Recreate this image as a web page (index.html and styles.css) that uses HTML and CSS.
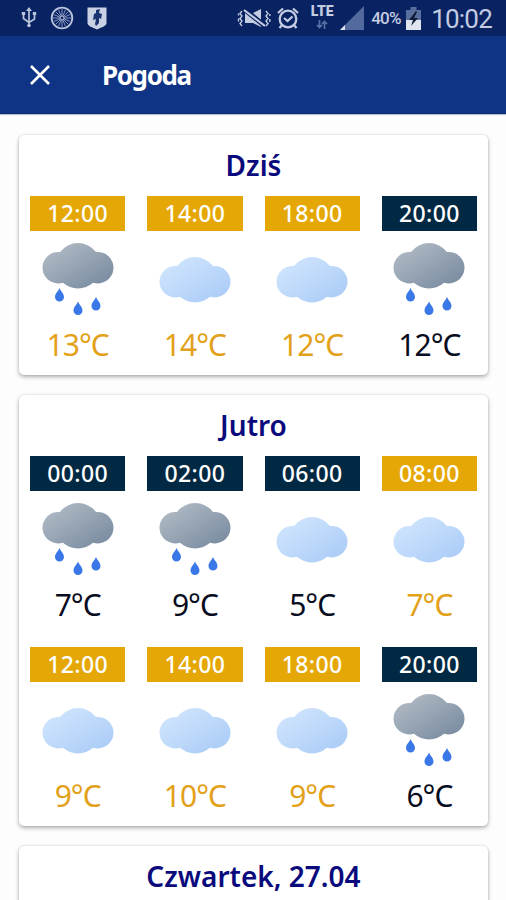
FILE: index.html
```html
<!DOCTYPE html>
<html lang="pl">
<head>
    <meta charset="UTF-8">
    <meta name="viewport" content="width=device-width, initial-scale=1.0">
    <title>Pogoda</title>
    <link rel="stylesheet" href="styles.css">
</head>
<body>
    <svg class="defs" width="0" height="0">
        <defs>
            <linearGradient id="greyFill" x1="0" y1="0" x2="1" y2="1">
                <stop offset="0.1" stop-color="#b0bac4"/>
                <stop offset="0.95" stop-color="#77899f"/>
            </linearGradient>
            <linearGradient id="blueFill" x1="0" y1="0" x2="1" y2="1">
                <stop offset="0.1" stop-color="#d0e5fd"/>
                <stop offset="0.95" stop-color="#a9cbf7"/>
            </linearGradient>
            <path id="cloudShape" d="M19 10A22.600 22.600 0 0 1 55 10A15.800 15.800 0 1 1 52 40.800A22.600 22.600 0 0 1 22 40.800A15.800 15.800 0 1 1 19 10z"/>
            <path id="drop" d="M0 0c1 3 4.500 5.300 4.500 9a4.500 4.500 0 0 1-9 0C-4.500 5.300-1 3 0 0z"/>
            <symbol id="cloud" viewBox="0 0 74 76">
                <use href="#cloudShape" y="14" fill="url(#blueFill)"/>
            </symbol>
            <symbol id="rain" viewBox="0 0 74 76">
                <use href="#cloudShape" fill="url(#greyFill)"/>
                <g fill="#3b78e7">
                    <use href="#drop" x="18.500" y="46"/>
                    <use href="#drop" x="37" y="59.500"/>
                    <use href="#drop" x="55" y="55"/>
                </g>
            </symbol>
        </defs>
    </svg>

    <div class="status-bar">
        <div class="status-left">
            <svg width="16" height="22" viewBox="0 0 16 22" fill="none" stroke="#b9c3dc" stroke-width="1.700">
                <path d="M8 3v16M2.500 7v4.500L8 15.500l5.500-3.500V7"/>
                <path d="M8 0l3 4H5zM.800 5h3.400v3H.800zM11.800 5h3.400v3h-3.400z" fill="#b9c3dc" stroke="none"/>
                <circle cx="8" cy="18.500" r="1.800" fill="#b9c3dc" stroke="none"/>
            </svg>
            <svg width="24" height="24" viewBox="0 0 24 24" fill="none" stroke="#b9c3dc">
                <circle cx="12" cy="12" r="10.300" stroke-width="1.800"/>
                <path d="M12 3v18M3 12h18M5.600 5.600l12.800 12.800M18.400 5.600L5.600 18.400M8.500 3.700l7 16.600M15.500 3.700l-7 16.600M3.700 8.500l16.600 7M3.700 15.500l16.600-7" stroke-width="1" stroke="#8797bf"/>
                <circle cx="12" cy="12" r="2" fill="#082262" stroke-width="1"/>
            </svg>
            <svg width="20" height="23" viewBox="0 0 20 23">
                <path d="M.500.500h19V16c0 3-5 4.500-9.500 6.500C5.500 20.500.500 19 .500 16z" fill="#c9d2e4"/>
                <path d="M9 3l4-1-1 4 3 1-1 5-2-1v5l-3 3-1-2 1-5-3 1 1-6 2-1z" fill="#18336f"/>
            </svg>
        </div>
        <div class="status-right">
            <svg class="mute" width="34" height="20" viewBox="0 0 34 20" fill="none" stroke="#c3cce1">
                <path d="M8 5h8l8-4v18l-8-4H8z" fill="#c3cce1" stroke="none"/>
                <path d="M7 1l21 17" stroke="#082262" stroke-width="5"/>
                <path d="M7 2l21 16" stroke-width="2.200"/>
                <path d="M5 3L3 5.500 5 8l-2 2.500L5 13l-2 2.500L5 18M1.500 5.500v2M1.500 10.500v3M29 3l2 2.500L29 8l2 2.500L29 13l2 2.500L29 18M32.800 6v2M32.800 11v3" stroke-width="1.400"/>
            </svg>
            <svg class="alarm" width="22" height="23" viewBox="0 0 22 23" fill="none" stroke="#c3cce1" stroke-width="2.300">
                <circle cx="11" cy="12" r="8.300"/>
                <path d="M1 6l5-4.500M21 6l-5-4.500M5 18l-2.500 3M17 18l2.500 3M7 11l3.500 3 5-4.500"/>
            </svg>
            <div class="network">
                <span>LTE</span>
                <svg width="12" height="9" viewBox="0 0 12 9" fill="none" stroke="#5b70a6" stroke-width="1.700">
                    <path d="M3.500 0v7M1 5l2.500 2.500L6 5M8.500 9V2M6 4l2.500-2.500L11 4"/>
                </svg>
            </div>
            <svg class="signal" width="24" height="24" viewBox="0 0 24 24">
                <path d="M0 24L24 0v24z" fill="#526a9e"/>
                <path d="M0 24l5-5v5z" fill="#dce2ef"/>
            </svg>
            <span class="percent">40%</span>
            <svg class="battery" width="15" height="23" viewBox="0 0 15 23">
                <path d="M4.500 0h6v3H15v10H0V3h4.500z" fill="#586f9e"/>
                <path d="M0 13h15v10H0z" fill="#dfe4ee"/>
                <path d="M10 4l-7 9h4l-2 6 7-8H8l3-6z" fill="#101b38"/>
            </svg>
            <span class="clock">10:02</span>
        </div>
    </div>

    <div class="toolbar">
        <svg class="close" width="20" height="20" viewBox="0 0 20 20" fill="none" stroke="#fff" stroke-width="2.600">
            <path d="M1 1l18 18M19 1L1 19"/>
        </svg>
        <h1>Pogoda</h1>
    </div>

    <div class="content">
        <div class="card">
            <h2>Dziś</h2>
            <div class="hours">
                <div class="hour day">
                    <div class="time">12:00</div>
                    <svg class="icon"><use href="#rain"/></svg>
                    <div class="temp">13°C</div>
                </div>
                <div class="hour day">
                    <div class="time">14:00</div>
                    <svg class="icon"><use href="#cloud"/></svg>
                    <div class="temp">14°C</div>
                </div>
                <div class="hour day">
                    <div class="time">18:00</div>
                    <svg class="icon"><use href="#cloud"/></svg>
                    <div class="temp">12°C</div>
                </div>
                <div class="hour night">
                    <div class="time">20:00</div>
                    <svg class="icon"><use href="#rain"/></svg>
                    <div class="temp">12°C</div>
                </div>
            </div>
        </div>

        <div class="card">
            <h2>Jutro</h2>
            <div class="hours">
                <div class="hour night">
                    <div class="time">00:00</div>
                    <svg class="icon"><use href="#rain"/></svg>
                    <div class="temp">7°C</div>
                </div>
                <div class="hour night">
                    <div class="time">02:00</div>
                    <svg class="icon"><use href="#rain"/></svg>
                    <div class="temp">9°C</div>
                </div>
                <div class="hour night">
                    <div class="time">06:00</div>
                    <svg class="icon"><use href="#cloud"/></svg>
                    <div class="temp">5°C</div>
                </div>
                <div class="hour day">
                    <div class="time">08:00</div>
                    <svg class="icon"><use href="#cloud"/></svg>
                    <div class="temp">7°C</div>
                </div>
                <div class="hour day">
                    <div class="time">12:00</div>
                    <svg class="icon"><use href="#cloud"/></svg>
                    <div class="temp">9°C</div>
                </div>
                <div class="hour day">
                    <div class="time">14:00</div>
                    <svg class="icon"><use href="#cloud"/></svg>
                    <div class="temp">10°C</div>
                </div>
                <div class="hour day">
                    <div class="time">18:00</div>
                    <svg class="icon"><use href="#cloud"/></svg>
                    <div class="temp">9°C</div>
                </div>
                <div class="hour night">
                    <div class="time">20:00</div>
                    <svg class="icon"><use href="#rain"/></svg>
                    <div class="temp">6°C</div>
                </div>
            </div>
        </div>

        <div class="card">
            <h2>Czwartek, 27.04</h2>
        </div>
    </div>
</body>
</html>
```
FILE: styles.css
```css
* {
    box-sizing: border-box;
}
body {
    margin: 0;
    height: 900px;
    overflow: hidden;
    display: flex;
    flex-direction: column;
    background-color: #fdfdfd;
    font-family: "Noto Sans", sans-serif;
}
.defs {
    display: block;
    height: 0;
    flex: none;
}
svg {
    display: block;
    flex: none;
}
.status-bar {
    display: flex;
    justify-content: space-between;
    flex: none;
    height: 36px;
    padding: 0 14px 0 21px;
    background-color: #082262;
    color: #c3cce1;
    font-family: Roboto, sans-serif;
}
.status-left {
    display: flex;
    align-items: center;
    gap: 13px;
}
.status-right {
    display: flex;
    align-items: center;
}
.alarm {
    margin-left: 6px;
}
.network {
    display: flex;
    flex-direction: column;
    align-items: center;
    width: 24px;
    margin-left: 11px;
    margin-top: -4px;
    font-size: 14px;
    font-weight: 900;
    line-height: 15px;
}
.network svg {
    margin-top: 1px;
}
.signal {
    margin-left: 6px;
}
.percent {
    margin-left: 7px;
    width: 32px;
    font-size: 17px;
    font-weight: 500;
    letter-spacing: -0.8px;
    white-space: nowrap;
}
.battery {
    margin-left: 3px;
}
.clock {
    margin-left: 10px;
    padding-top: 2px;
    font-size: 26px;
    letter-spacing: -0.8px;
}
.toolbar {
    display: flex;
    align-items: center;
    flex: none;
    height: 78px;
    padding-left: 30px;
    background-color: #0f3485;
    border-bottom: 1px solid #0a2a70;
    box-shadow: 0 1px 1px #bbc3d6;
}
.toolbar h1 {
    margin: 0 0 0 52px;
    color: #fff;
    font-size: 26px;
    font-weight: 700;
    letter-spacing: -1.4px;
}
.content {
    display: flex;
    flex-direction: column;
    flex: 1;
    min-height: 0;
    overflow: hidden;
    gap: 20px;
    padding: 21px 18px 0 19px;
}
.card {
    flex: none;
    background-color: #fff;
    border-radius: 5px;
    box-shadow: 0 2px 4px rgba(0, 0, 0, 0.3), 0 0 2px rgba(0, 0, 0, 0.15);
}
.card h2 {
    margin: 0;
    padding-top: 10px;
    height: 61px;
    color: #0a0a7c;
    font-size: 28px;
    font-weight: 600;
    line-height: 40px;
    text-align: center;
}
.hours {
    display: grid;
    grid-template-columns: repeat(4, 1fr);
    row-gap: 12px;
}
.hour {
    display: flex;
    flex-direction: column;
    align-items: center;
    height: 179px;
    padding: 0 11px;
}
.time {
    width: 100%;
    height: 35px;
    color: #fff;
    font-size: 23px;
    font-weight: 500;
    line-height: 35px;
    letter-spacing: 0.4px;
    text-align: center;
}
.icon {
    width: 74px;
    height: 76px;
    margin-top: 11px;
}
.temp {
    margin-top: 7px;
    font-size: 30px;
    line-height: 40px;
    letter-spacing: -1px;
}
.day .time {
    background-color: #e5a705;
}
.day .temp {
    color: #e3a11a;
}
.night .time {
    background-color: #022943;
}
.night .temp {
    color: #080c20;
}
```
